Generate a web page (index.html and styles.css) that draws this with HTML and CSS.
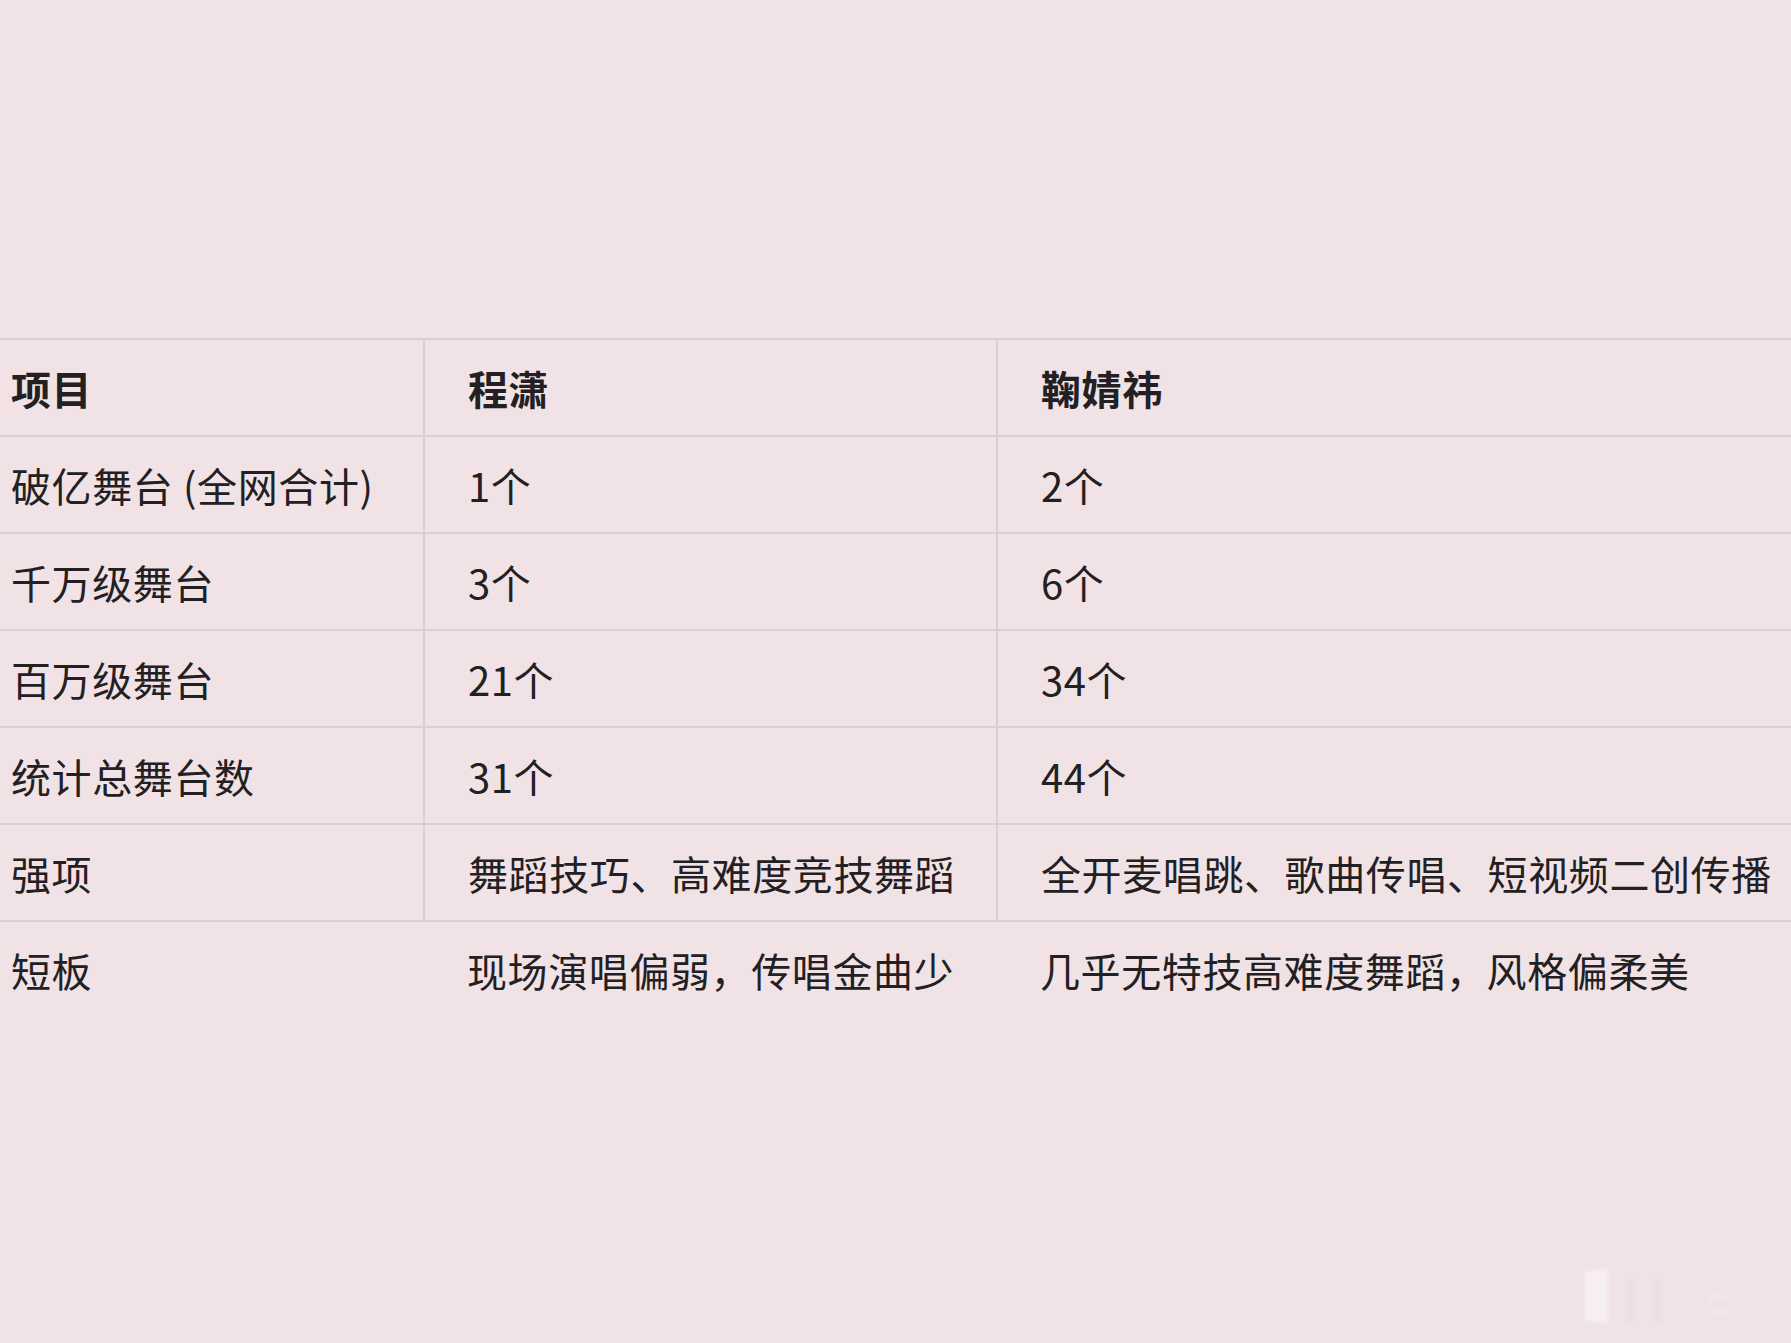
FILE: index.html
```html
<!DOCTYPE html>
<html lang="zh-CN">
<head>
<meta charset="utf-8">
<title>舞台对比</title>
<link rel="stylesheet" href="styles.css">
</head>
<body>
<div class="page">
  <div class="table-wrap">
    <table class="compare">
      <colgroup>
        <col class="c1"><col class="c2"><col class="c3">
      </colgroup>
      <thead>
        <tr class="head">
          <th>项目</th><th>程潇</th><th>鞠婧祎</th>
        </tr>
      </thead>
      <tbody>
        <tr><td>破亿舞台 (全网合计)</td><td>1个</td><td>2个</td></tr>
        <tr><td>千万级舞台</td><td>3个</td><td>6个</td></tr>
        <tr><td>百万级舞台</td><td>21个</td><td>34个</td></tr>
        <tr><td>统计总舞台数</td><td>31个</td><td>44个</td></tr>
        <tr><td>强项</td><td>舞蹈技巧、高难度竞技舞蹈</td><td>全开麦唱跳、歌曲传唱、短视频二创传播</td></tr>
        <tr class="last"><td>短板</td><td>现场演唱偏弱，传唱金曲少</td><td>几乎无特技高难度舞蹈，风格偏柔美</td></tr>
      </tbody>
    </table>
  </div>
  <div class="watermark" aria-hidden="true">
    <span class="wm-block"></span><span class="wm-bar"></span><span class="wm-bar"></span><span class="wm-lines"></span>
  </div>
</div>
</body>
</html>
```
FILE: styles.css
```css
html, body {
  margin: 0;
  padding: 0;
}
body {
  background: #f0e2e5;
  font-family: "Noto Sans CJK SC", "Noto Sans", sans-serif;
  color: #222022;
}
.page {
  width: 1791px;
  height: 1343px;
  overflow: hidden;
  position: relative;
}
.table-wrap {
  padding-top: 338px;
  margin-left: -32px;
  width: 2000px;
}
.compare {
  border-collapse: collapse;
  table-layout: fixed;
  width: 1960px;
}
.c1 { width: 456px; }
.c2 { width: 573px; }
.c3 { width: 931px; }
.compare th,
.compare td {
  height: 95px;
  padding: 0 0 0 43px;
  text-align: left;
  vertical-align: middle;
  font-size: 40px;
  letter-spacing: 0.6px;
  line-height: 1;
  white-space: nowrap;
  border-bottom: 2px solid #dccdd1;
  border-right: 2px solid #dccdd1;
}
.compare th {
  font-weight: 700;
}
.compare tr.head th {
  border-top: 2px solid #dccdd1;
}
.compare th:last-child,
.compare td:last-child {
  border-right: none;
}
.compare tr.last td {
  border-bottom: none;
  border-right: none;
}
.watermark {
  position: absolute;
  left: 1585px;
  top: 1270px;
  display: flex;
  align-items: flex-end;
  gap: 20px;
  opacity: 0.55;
  filter: blur(2px);
}
.wm-block {
  width: 23px;
  height: 52px;
  background: #fdf9fa;
  border-radius: 2px;
}
.wm-bar {
  width: 6px;
  height: 40px;
  background: #e6d6da;
}
.wm-lines {
  width: 22px;
  height: 12px;
  margin-left: 28px;
  margin-bottom: 8px;
  border-top: 3px solid #faf4f5;
  border-bottom: 3px solid #faf4f5;
}
```
